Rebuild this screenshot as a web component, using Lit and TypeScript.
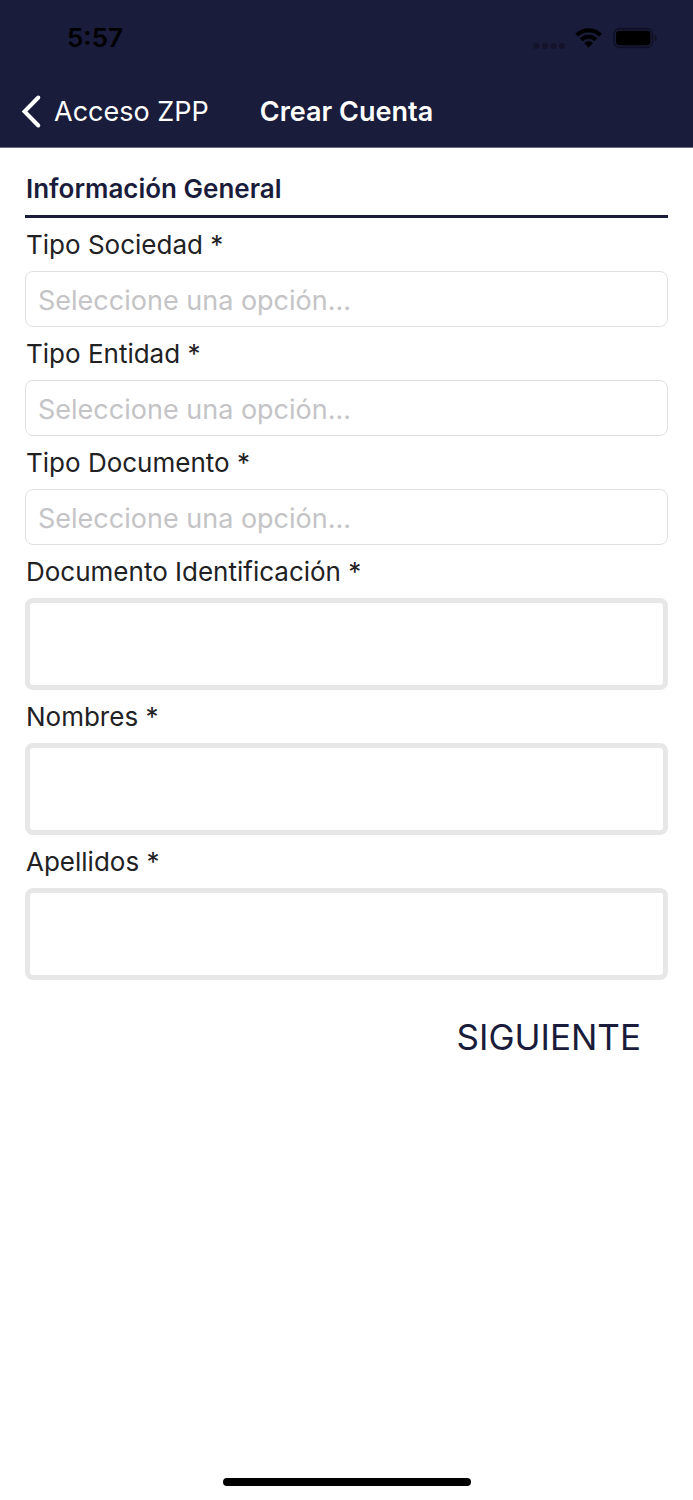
import { LitElement, html, css } from "lit";
import { customElement } from "lit/decorators.js";

const SELECT_FIELDS = [
  { id: "tipo-sociedad", label: "Tipo Sociedad *" },
  { id: "tipo-entidad", label: "Tipo Entidad *" },
  { id: "tipo-documento", label: "Tipo Documento *" },
];

const TEXT_FIELDS = [
  { id: "documento", label: "Documento Identificación *" },
  { id: "nombres", label: "Nombres *" },
  { id: "apellidos", label: "Apellidos *" },
];

@customElement("status-bar")
export class StatusBar extends LitElement {
  static styles = css`
    :host {
      display: flex;
      justify-content: space-between;
      align-items: center;
      height: 76px;
      padding: 0 36px 0 67px;
      color: #000;
    }
    .time {
      font-size: 26px;
      line-height: 32px;
      font-weight: 600;
    }
    .icons {
      display: block;
    }
  `;

  render() {
    return html`
      <span class="time">5:57</span>
      <svg class="icons" width="124" height="24" viewBox="0 0 124 24" aria-hidden="true">
        <g opacity="0.25">
          <rect x="0.5" y="17" width="6" height="6" rx="2" />
          <rect x="9" y="17" width="6" height="6" rx="2" />
          <rect x="17.5" y="17" width="6" height="6" rx="2" />
          <rect x="26" y="17" width="6" height="6" rx="2" />
        </g>
        <path d="M42.6 7.7a19 19 0 0 1 26 0l-2.5 2.6a15.2 15.2 0 0 0-21 0z" stroke="#000" stroke-width="0.6" stroke-linejoin="round" />
        <path d="M47.1 12.3a12.4 12.4 0 0 1 17 0l-2.6 2.6a8.6 8.6 0 0 0-11.8 0z" stroke="#000" stroke-width="0.6" stroke-linejoin="round" />
        <path d="M51.6 17a5.9 5.9 0 0 1 8 0l-4 4.3z" stroke="#000" stroke-width="0.6" stroke-linejoin="round" />
        <rect x="81" y="2.6" width="38.4" height="18.8" rx="5.5" fill="none" stroke="#000" stroke-width="1.6" opacity="0.4" />
        <rect x="83" y="4.8" width="34.4" height="14.4" rx="3.4" />
        <path d="M121.8 8.6c2.4 1.3 2.4 5.5 0 6.8z" opacity="0.45" />
      </svg>
    `;
  }
}

@customElement("app-root")
export class AppRoot extends LitElement {
  static styles = css`
    :host {
      display: flex;
      flex-direction: column;
      min-height: 100vh;
      background: #fff;
      color: #212124;
      font-family: Inter, "Liberation Sans", sans-serif;
    }
    .header {
      background: #1a1c3b;
      border-bottom: 1px solid #6b6c80;
    }
    .nav {
      display: grid;
      grid-template-columns: 1fr auto 1fr;
      align-items: center;
      height: 71px;
      padding: 0 20px;
      color: #fff;
    }
    .back {
      display: flex;
      align-items: center;
      gap: 12px;
      justify-self: start;
      color: inherit;
      text-decoration: none;
      font-size: 27px;
      line-height: 35px;
      white-space: nowrap;
    }
    .title {
      margin: 0;
      font-size: 27px;
      line-height: 35px;
      font-weight: 600;
    }
    .form {
      flex: 1;
      display: flex;
      flex-direction: column;
      padding: 22px 25px 0;
    }
    .section {
      margin: 0;
      padding: 2px 1px 9px;
      border-bottom: 3px solid #1a1c3b;
      color: #1a1c3b;
      font-size: 26px;
      line-height: 34px;
      font-weight: 600;
    }
    .field {
      display: flex;
      flex-direction: column;
    }
    .label {
      padding: 0 1px;
      font-size: 26px;
      line-height: 53px;
    }
    .select,
    .text {
      box-sizing: border-box;
      width: 100%;
      margin: 0;
      background: #fff;
      border-radius: 8px;
      font-family: inherit;
      font-size: 27px;
      outline: none;
    }
    .select {
      appearance: none;
      height: 56px;
      padding: 2px 12px 0;
      border: 1px solid #e0e0e0;
      color: #c4c4c6;
    }
    .text {
      height: 92px;
      padding: 0 16px;
      border: 5px solid #e7e7e7;
      color: inherit;
    }
    .next {
      align-self: flex-end;
      margin: 33px 27px 0;
      padding: 0;
      border: 0;
      background: none;
      color: #1a1c3b;
      font-family: inherit;
      font-size: 35px;
      line-height: 48px;
    }
    .home {
      align-self: center;
      width: 248px;
      height: 8px;
      margin: 24px 0 14px;
      border-radius: 4px;
      background: #000;
    }
  `;

  render() {
    return html`
      <header class="header">
        <status-bar></status-bar>
        <nav class="nav">
          <a class="back" href="#">
            <svg width="22" height="35" viewBox="0 0 22 35" aria-hidden="true">
              <path d="M18.3 3.5 4.5 17.5l13.8 14" fill="none" stroke="#fff" stroke-width="4" stroke-linecap="round" stroke-linejoin="miter" />
            </svg>
            <span>Acceso ZPP</span>
          </a>
          <h1 class="title">Crear Cuenta</h1>
        </nav>
      </header>
      <form class="form">
        <h2 class="section">Información General</h2>
        ${SELECT_FIELDS.map(
          (f) => html`
            <div class="field">
              <label class="label" for=${f.id}>${f.label}</label>
              <select class="select" id=${f.id}>
                <option value="">Seleccione una opción...</option>
              </select>
            </div>
          `
        )}
        ${TEXT_FIELDS.map(
          (f) => html`
            <div class="field">
              <label class="label" for=${f.id}>${f.label}</label>
              <input class="text" id=${f.id} type="text" />
            </div>
          `
        )}
        <button class="next" type="button">SIGUIENTE</button>
      </form>
      <div class="home"></div>
    `;
  }
}
